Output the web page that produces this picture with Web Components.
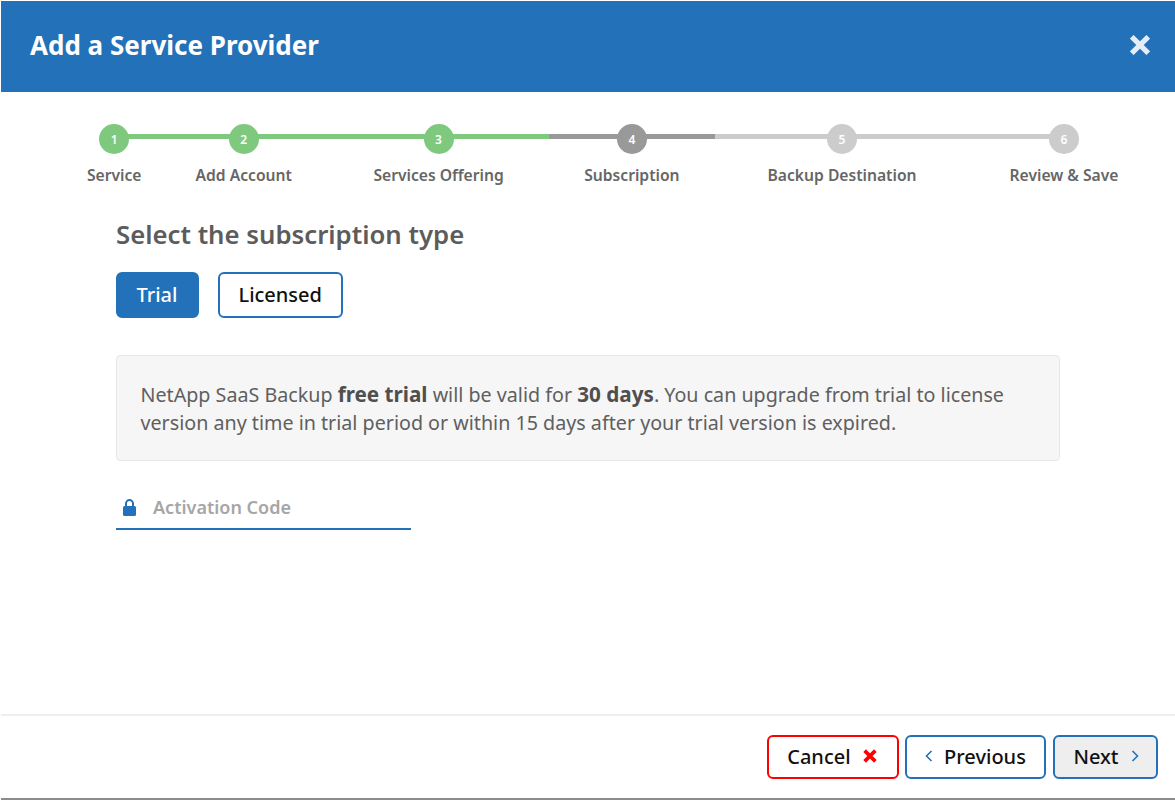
<!DOCTYPE html>
<html>
<head>
<meta charset="utf-8">
<title>Add a Service Provider</title>
<style>
  html, body { margin: 0; height: 100%; background: #fff; }
  body { font-family: "Noto Sans", "Open Sans", sans-serif; overflow: hidden; }
</style>
</head>
<body>
<provider-dialog heading="Add a Service Provider">
  <wizard-steps></wizard-steps>
  <subscription-panel></subscription-panel>
  <action-button slot="footer" kind="cancel">Cancel</action-button>
  <action-button slot="footer" kind="previous">Previous</action-button>
  <action-button slot="footer" kind="next">Next</action-button>
</provider-dialog>

<script>
class ProviderDialog extends HTMLElement {
  constructor() {
    super()
    this.attachShadow({ mode: 'open' })
  }

  connectedCallback() {
    this.shadowRoot.innerHTML = `
      <style>
        :host {
          display: flex;
          flex-direction: column;
          box-sizing: border-box;
          height: 799px;
          margin: 1px 0 0 1px;
          border-bottom: 2px solid #8c8c8c;
        }
        header {
          flex: none;
          display: flex;
          align-items: center;
          justify-content: space-between;
          box-sizing: border-box;
          height: 91px;
          padding: 0 25px 4px 29px;
          background: #2271b9;
          color: #fff;
        }
        h1 {
          margin: 0;
          font-size: 26px;
          font-weight: 700;
        }
        header svg { display: block; opacity: .88; }
        main { flex: 1; }
        footer {
          flex: none;
          display: flex;
          justify-content: flex-end;
          gap: 6.5px;
          height: 84px;
          box-sizing: border-box;
          padding: 19px 17px 0 0;
          border-top: 2px solid #eee;
        }
      </style>
      <header>
        <h1>${this.getAttribute('heading')}</h1>
        <svg width="20" height="20" viewBox="0 0 20 20">
          <path d="M3 3 17 17M17 3 3 17" stroke="#fff" stroke-width="5.6" stroke-linecap="square" fill="none" transform="translate(10 10) scale(.92) translate(-10 -10)"/>
        </svg>
      </header>
      <main><slot></slot></main>
      <footer><slot name="footer"></slot></footer>
    `
  }
}

class WizardSteps extends HTMLElement {
  constructor() {
    super()
    this.attachShadow({ mode: 'open' })
    this.steps = [
      { label: 'Service', state: 'done', gap: 0 },
      { label: 'Add Account', state: 'done', gap: 54 },
      { label: 'Services Offering', state: 'done', gap: 81.5 },
      { label: 'Subscription', state: 'current', gap: 80.5 },
      { label: 'Backup Destination', state: 'todo', gap: 88 },
      { label: 'Review & Save', state: 'todo', gap: 93 }
    ]
  }

  connectedCallback() {
    const stepsHtml = this.steps.map((step, ii) => `
      <div class="step ${step.state}" style="margin-left:${step.gap}px">
        <span class="dot">${ii + 1}</span>
        <span class="label">${step.label.replace('&', '&amp;')}</span>
      </div>
    `).join('')

    this.shadowRoot.innerHTML = `
      <style>
        :host {
          display: grid;
          padding: 32px 0 0 86px;
        }
        .track, .steps { grid-area: 1 / 1; }
        .track {
          display: flex;
          height: 5px;
          margin: 10px 0 0 27px;
        }
        .track i { display: block; height: 5px; }
        .steps { display: flex; align-items: flex-start; }
        .step {
          flex: none;
          display: flex;
          flex-direction: column;
          align-items: center;
        }
        .dot {
          display: flex;
          align-items: center;
          justify-content: center;
          width: 30px;
          height: 30px;
          border-radius: 50%;
          color: #fff;
          font-size: 12px;
          font-weight: 600;
        }
        .done .dot { background: #7fc97f; }
        .current .dot { background: #999; }
        .todo .dot { background: #ccc; }
        .label {
          margin-top: 11px;
          color: #666;
          font-size: 15.65px;
          font-weight: 600;
          line-height: 20px;
          white-space: nowrap;
        }
      </style>
      <div class="track">
        <i style="width:435px;background:#7fc97f"></i>
        <i style="width:166px;background:#999"></i>
        <i style="width:349px;background:#ccc"></i>
      </div>
      <div class="steps">${stepsHtml}</div>
    `
  }
}

class SubscriptionPanel extends HTMLElement {
  constructor() {
    super()
    this.attachShadow({ mode: 'open' })
  }

  connectedCallback() {
    this.shadowRoot.innerHTML = `
      <style>
        :host {
          display: block;
          width: 944px;
          margin-left: 115px;
          padding-top: 32px;
        }
        h2 {
          margin: 0;
          color: #5c5c5c;
          font-size: 25.75px;
          font-weight: 600;
          line-height: 34px;
        }
        .types {
          display: flex;
          gap: 19px;
          margin-top: 21px;
        }
        .notice {
          box-sizing: border-box;
          height: 106px;
          margin-top: 37px;
          padding: 25px 24px 0 23.5px;
          border: 1px solid #e6e6e6;
          border-radius: 4px;
          background: #f6f6f6;
          color: #5f5f5f;
          font-size: 19.7px;
          line-height: 28px;
        }
        b { font-size: 20.7px; font-weight: 700; color: #4f4f4f; line-height: 1; }
        .code {
          display: flex;
          align-items: center;
          gap: 16px;
          box-sizing: border-box;
          width: 295px;
          height: 47px;
          margin-top: 22px;
          padding: 3px 0 0 6px;
          border-bottom: 2px solid #2271b9;
          color: #a6a6a6;
          font-size: 18px;
          font-weight: 600;
        }
        .code svg { flex: none; }
      </style>
      <h2>Select the subscription type</h2>
      <div class="types">
        <type-toggle selected>Trial</type-toggle>
        <type-toggle>Licensed</type-toggle>
      </div>
      <div class="notice">NetApp SaaS Backup <b>free trial</b> will be valid for <b>30 days</b>. You can upgrade from trial to license version any time in trial period or within 15 days after your trial version is expired.</div>
      <div class="code">
        <svg width="15" height="17" viewBox="0 0 15 17">
          <path d="M4 8V4.6a3.5 3.5 0 0 1 7 0V8" stroke="#2271b9" stroke-width="2" fill="none"/>
          <rect x="1" y="7" width="13" height="10" rx="1.5" fill="#2271b9"/>
        </svg>
        <span>Activation Code</span>
      </div>
    `
  }
}

class TypeToggle extends HTMLElement {
  constructor() {
    super()
    this.attachShadow({ mode: 'open' })
  }

  connectedCallback() {
    this.shadowRoot.innerHTML = `
      <style>
        :host {
          display: flex;
          align-items: center;
          box-sizing: border-box;
          height: 46px;
          padding: 0 19.5px 2px 18.5px;
          border: 2px solid #2271b9;
          border-radius: 6px;
          background: #fff;
          color: #111;
          font-size: 20px;
          font-weight: 500;
        }
        :host([selected]) {
          background: #2271b9;
          color: #fff;
        }
      </style>
      <slot></slot>
    `
  }
}

class ActionButton extends HTMLElement {
  constructor() {
    super()
    this.attachShadow({ mode: 'open' })
  }

  connectedCallback() {
    const kind = this.getAttribute('kind')
    let before = ''
    let after = ''
    switch (kind) {
      case 'cancel':
        after = '<svg width="14" height="14" viewBox="0 0 14 14"><path d="M3 3 11 11M11 3 3 11" stroke="#f00" stroke-width="3.8" stroke-linecap="square" fill="none"/></svg>'
        break
      case 'previous':
        before = '<svg width="8" height="12" viewBox="0 0 8 12"><path d="M6.5 1 1.5 6 6.5 11" stroke="#2271b9" stroke-width="1.6" fill="none"/></svg>'
        break
      default:
        after = '<svg width="8" height="12" viewBox="0 0 8 12"><path d="M1.5 1 6.5 6 1.5 11" stroke="#2271b9" stroke-width="1.6" fill="none"/></svg>'
        break
    }
    this.shadowRoot.innerHTML = `
      <style>
        :host {
          display: flex;
          align-items: center;
          gap: 12px;
          box-sizing: border-box;
          height: 44px;
          padding: 0 17.5px 2px 18px;
          border: 2px solid #2271b9;
          border-radius: 6px;
          background: #fff;
          color: #111;
          font-size: 20px;
          font-weight: 500;
        }
        :host([kind="cancel"]) { border-color: #f00; padding-right: 20px; }
        :host([kind="previous"]) { gap: 11px; padding-right: 18.5px; }
        :host([kind="next"]) { margin-left: .5px; background: #eee; }
        svg { flex: none; display: block; }
      </style>
      ${before}<slot></slot>${after}
    `
  }
}

customElements.define('provider-dialog', ProviderDialog)
customElements.define('wizard-steps', WizardSteps)
customElements.define('subscription-panel', SubscriptionPanel)
customElements.define('type-toggle', TypeToggle)
customElements.define('action-button', ActionButton)
</script>
</body>
</html>
